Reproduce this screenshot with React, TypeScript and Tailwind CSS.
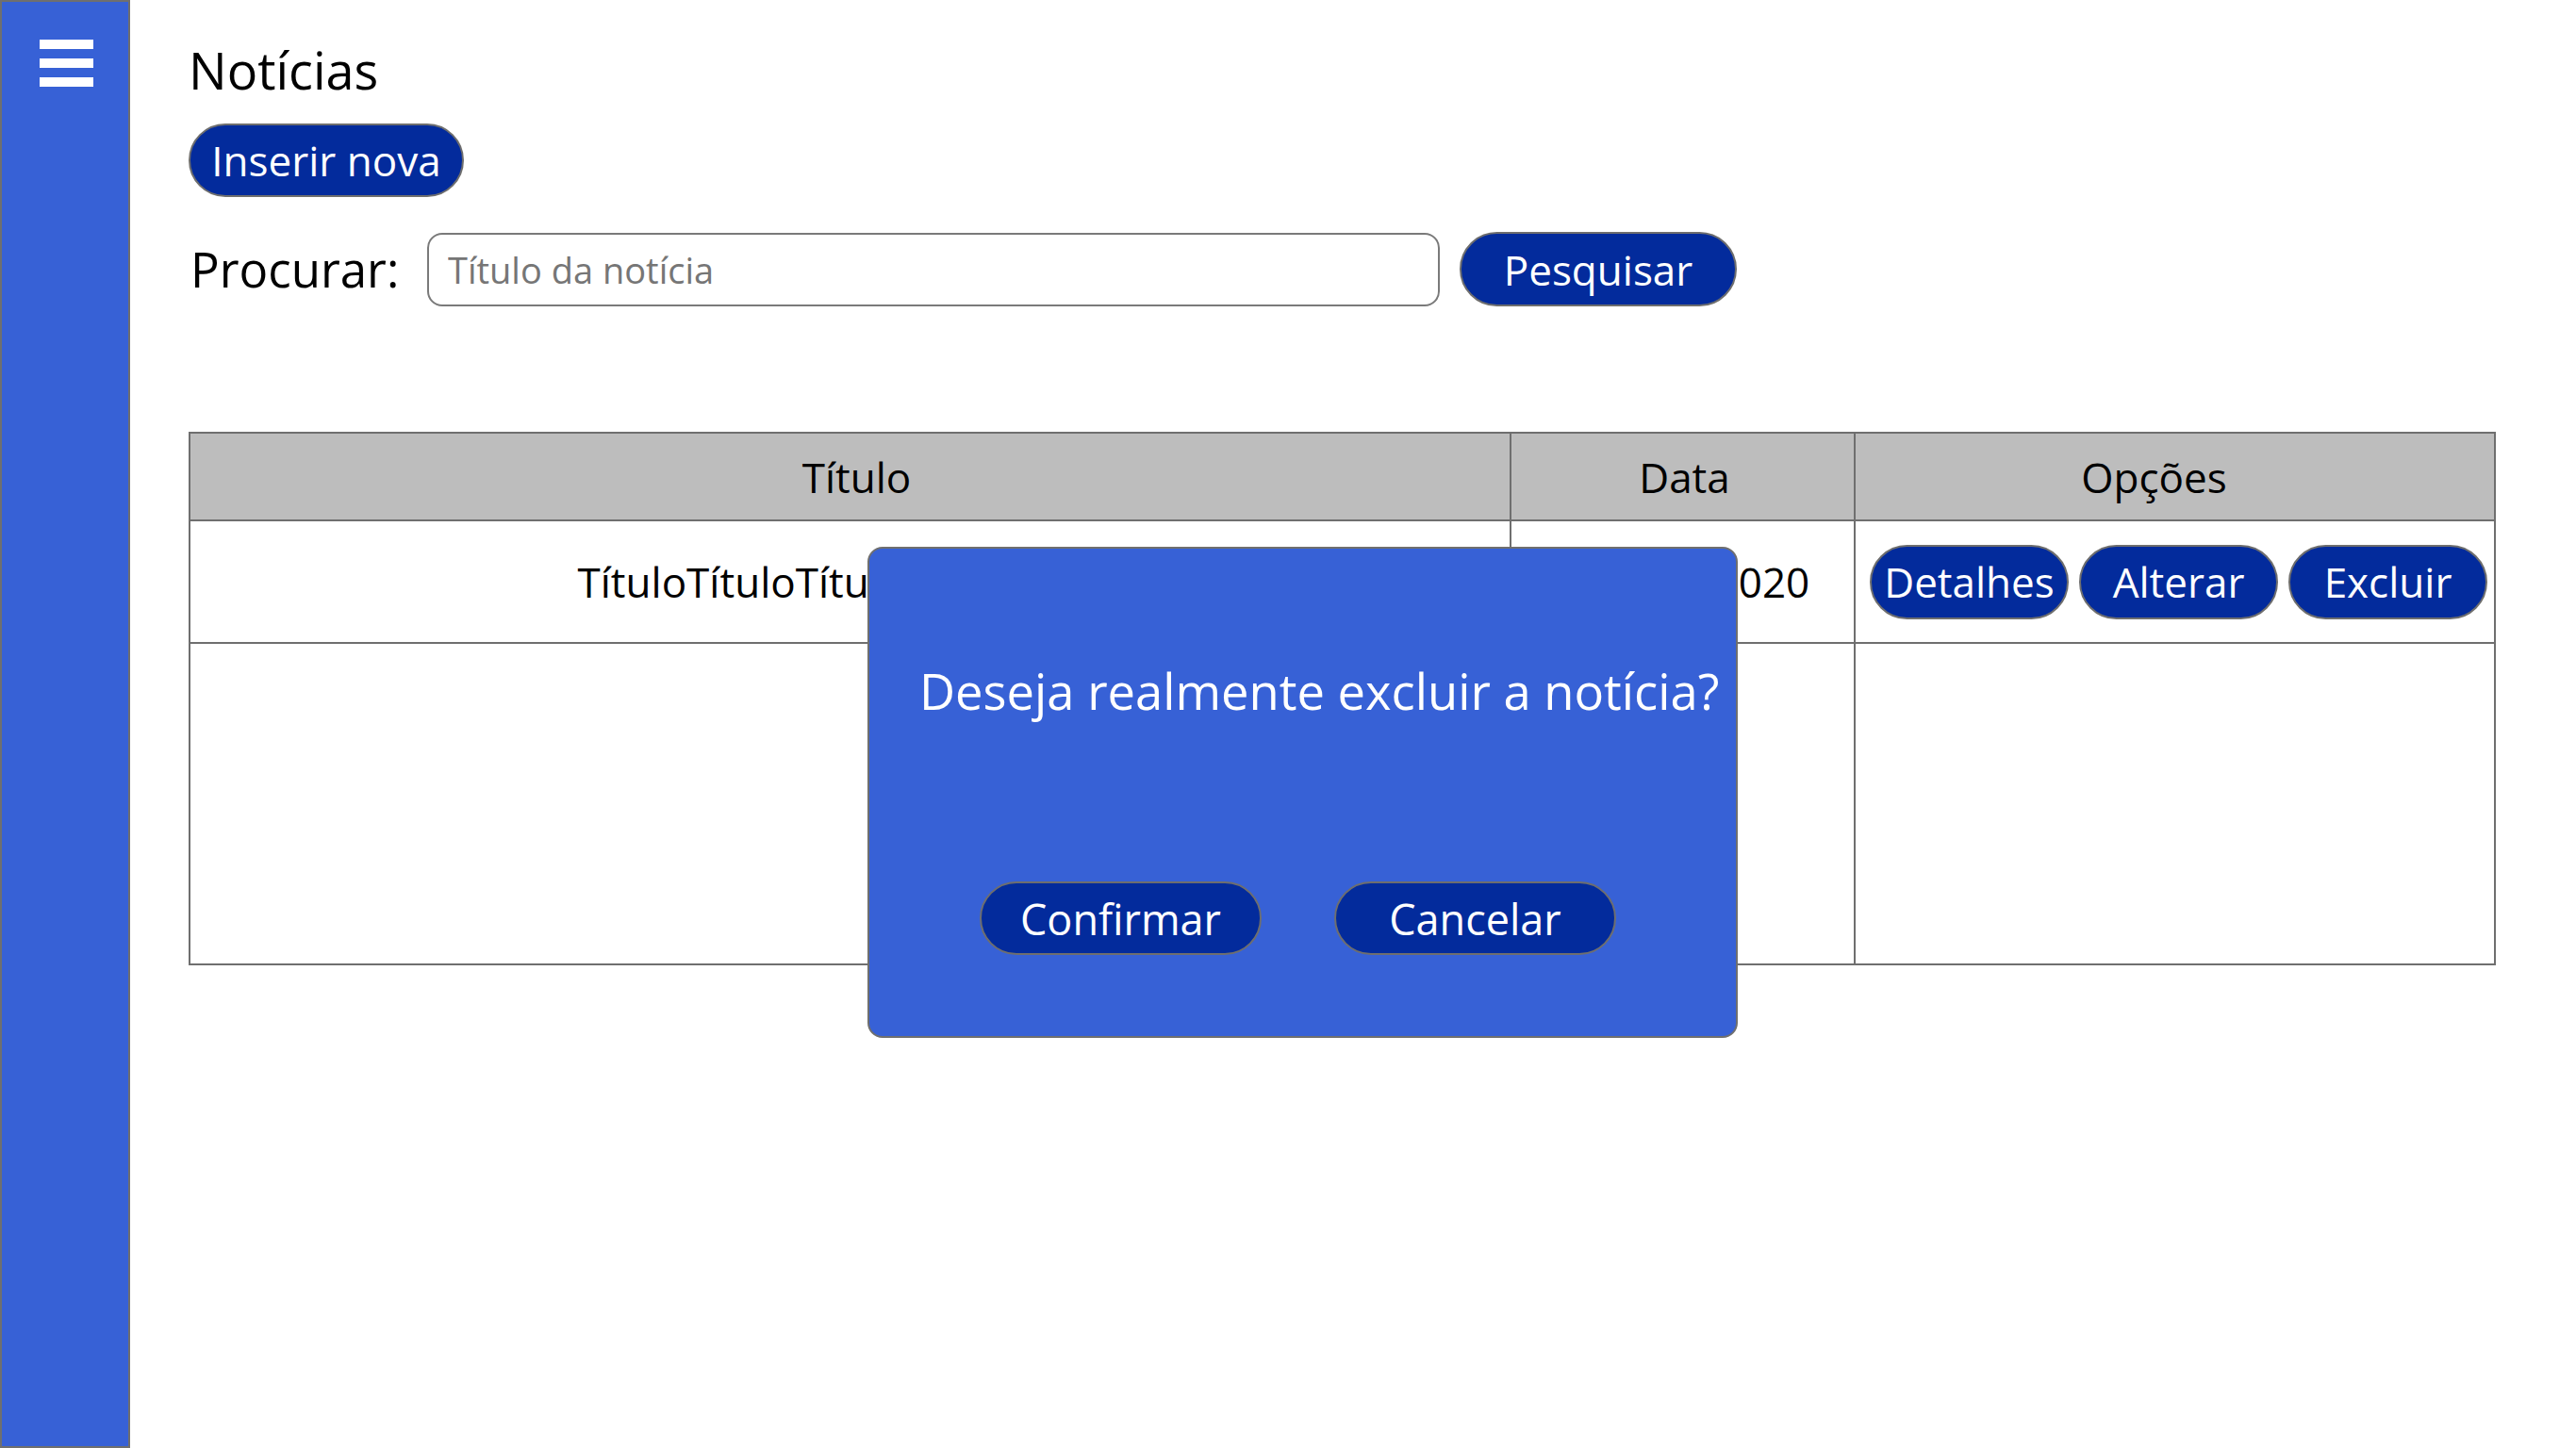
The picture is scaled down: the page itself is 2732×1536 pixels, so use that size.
import React from "react";

const font = { fontFamily: '"Open Sans", "Noto Sans", sans-serif' };

function PillButton({ children, className = "" }: { children: React.ReactNode; className?: string }) {
  return (
    <button
      className={
        "flex items-center justify-center rounded-full border-2 border-[#6e6e6e] bg-[#032b9c] text-white leading-none " +
        className
      }
    >
      {children}
    </button>
  );
}

export default function App() {
  const title = "TítuloTítuloTítuloTítuloTítulo";
  return (
    <div className="relative flex h-[1536px] w-[2732px] overflow-hidden bg-white text-black" style={font}>
      {/* Sidebar */}
      <aside className="h-full w-[138px] shrink-0 border-2 border-[#6f6f6f] bg-[#3761d6] pl-[40px] pt-[40px]">
        <div className="flex w-[57px] flex-col gap-[10px]">
          <span className="block h-[10px] w-[57px] bg-white" />
          <span className="block h-[10px] w-[57px] bg-white" />
          <span className="block h-[10px] w-[57px] bg-white" />
        </div>
      </aside>

      {/* Main */}
      <main className="flex-1 pl-[62px] pr-[87px] pt-[42px]">
        <h1 className="text-[54px] font-normal leading-[64px]">Notícias</h1>

        <PillButton className="mt-[25px] h-[78px] w-[292px] text-[44px]">Inserir nova</PillButton>

        <div className="mt-[37px] flex h-[79px] items-center">
          <span className="w-[253px] pl-[2px] text-[51px] leading-none">Procurar:</span>
          <input
            className="h-[78px] w-[1074px] rounded-[16px] border-2 border-[#7a7a7a] bg-white pl-[20px] text-[38px] text-black outline-none placeholder:text-[#767676]"
            placeholder="Título da notícia"
            style={font}
          />
          <PillButton className="ml-[21px] h-[79px] w-[294px] text-[44px]">Pesquisar</PillButton>
        </div>

        <table className="mt-[133px] w-[2445px] table-fixed border-collapse text-[44px]">
          <colgroup>
            <col className="w-[1401px]" />
            <col className="w-[365px]" />
            <col className="w-[679px]" />
          </colgroup>
          <thead>
            <tr className="h-[93px] bg-[#bdbdbd]">
              <th className="border-2 border-[#6f6f6f] pl-[14px] font-normal">Título</th>
              <th className="border-2 border-[#6f6f6f] pl-[4px] font-normal">Data</th>
              <th className="border-2 border-[#6f6f6f] pr-[44px] font-normal">Opções</th>
            </tr>
          </thead>
          <tbody>
            <tr className="h-[130px]">
              <td className="overflow-hidden whitespace-nowrap border-2 border-[#6f6f6f] text-center">{title}</td>
              <td className="border-2 border-[#6f6f6f] pl-[36px] text-center">01/01/2020</td>
              <td className="border-2 border-[#6f6f6f]">
                <div className="flex gap-[11px] pl-[15px]">
                  <PillButton className="h-[79px] w-[211px] text-[44px]">Detalhes</PillButton>
                  <PillButton className="h-[79px] w-[211px] text-[44px]">Alterar</PillButton>
                  <PillButton className="h-[79px] w-[211px] text-[44px]">Excluir</PillButton>
                </div>
              </td>
            </tr>
            <tr className="h-[341px]">
              <td className="border-2 border-[#6f6f6f]" />
              <td className="border-2 border-[#6f6f6f]" />
              <td className="border-2 border-[#6f6f6f]" />
            </tr>
          </tbody>
        </table>
      </main>

      {/* Confirmation modal */}
      <div className="absolute left-[920px] top-[580px] flex h-[521px] w-[923px] flex-col rounded-[16px] border-2 border-[#6f6f6f] bg-[#3761d6] text-white">
        <p className="mt-[125px] whitespace-nowrap pl-[53px] text-[52.5px] leading-none">
          Deseja realmente excluir a notícia?
        </p>
        <div className="mt-[auto] mb-[86px] flex justify-center gap-[77px] pr-[10px]">
          <PillButton className="h-[78px] w-[299px] text-[45px]">Confirmar</PillButton>
          <PillButton className="h-[78px] w-[299px] text-[45px]">Cancelar</PillButton>
        </div>
      </div>
    </div>
  );
}
